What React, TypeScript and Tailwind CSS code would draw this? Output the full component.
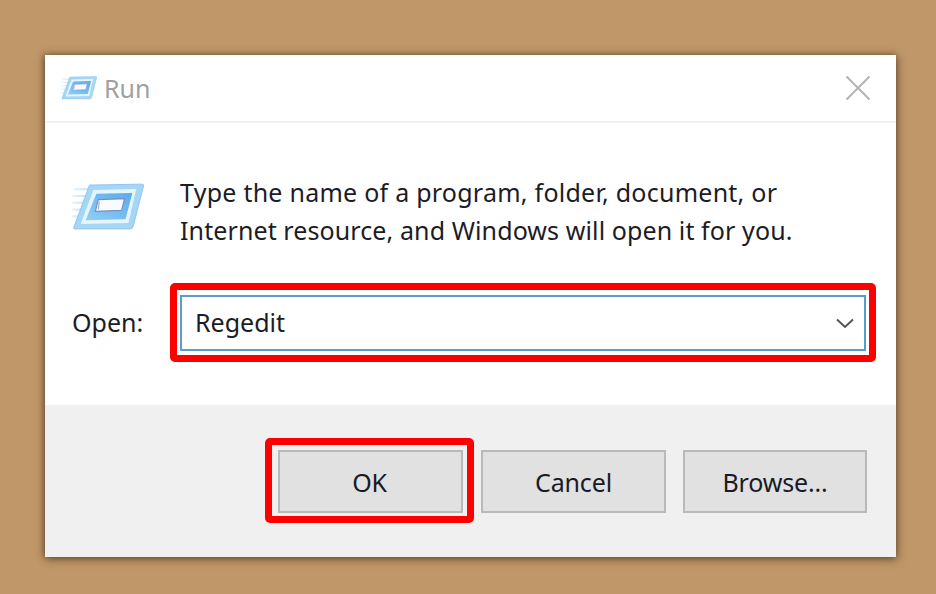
import React from "react";

const font = { fontFamily: '"Noto Sans", "Open Sans", sans-serif' };

function RunIcon({ size }: { size: number }) {
  const id = `g${size}`;
  const fade = `f${size}`;
  return (
    <svg width={size} height={size * 0.68} viewBox="0 0 74 50" className="block blur-[0.4px]">
      <defs>
        <linearGradient id={id} x1="0" y1="1" x2="1" y2="0">
          <stop offset="0" stopColor="#8ed0f6" />
          <stop offset="1" stopColor="#5aaaea" />
        </linearGradient>
        <linearGradient id={fade} x1="0" y1="0" x2="1" y2="0">
          <stop offset="0" stopColor="#e9f5fc" />
          <stop offset="1" stopColor="#bde0f6" />
        </linearGradient>
      </defs>
      <g fill={`url(#${fade})`}>
        <rect x="2" y="5" width="20" height="2.400" />
        <rect x="0" y="12" width="18" height="2.400" />
        <rect x="0" y="19" width="16" height="2.400" />
        <rect x="0" y="26" width="14" height="2.400" />
        <rect x="0" y="33" width="11" height="2.400" />
      </g>
      <path d="M18 2 L72 1 Q74 1 73.500 3 L63 44 Q62 47 60 47 L3 47 Q1 47 2 45 Z" fill="#a5d6f5" stroke="#8cc6ee" strokeWidth="1" />
      <path d="M22 7 L66 6 L58 41 L9 42 Z" fill="#e6f4fc" />
      <path d="M25 11 L62 10 L55 37 L14 38 Z" fill={`url(#${id})`} />
      <path d="M27 17 L54 16 L51 28 L24 29 Z" fill="#f8fcff" stroke="#7a8cc8" strokeWidth="1.200" />
      <line x1="28" y1="19" x2="27" y2="27" stroke="#9a9ab4" strokeWidth="1" />
    </svg>
  );
}

function Btn({ label, w }: { label: string; w: string }) {
  return (
    <div className={`${w} h-[63px] border-2 border-[#b9b9b9] bg-[#e1e1e1] flex items-center justify-center pt-[2px] text-[25px] tracking-[-0.15px] text-[#1a1a24]`}>
      {label}
    </div>
  );
}

export default function App() {
  return (
    <div className="w-[936px] h-[594px] overflow-hidden bg-[#c09768] pt-[55px] pl-[45px]" style={font}>
      <div className="w-[851px] h-[502px] bg-white flex flex-col shadow-[-1px_0_6px_rgba(70,50,30,0.55),1px_2px_9px_rgba(70,50,30,0.6)]">
        <div className="h-[68px] shrink-0 border-b-2 border-[#f1f1f1] flex items-center pl-[16px] pr-[25px]">
          <RunIcon size={36} />
          <span className="ml-[7px] pt-[2px] text-[25px] text-[#a0a0a0]">Run</span>
          <svg width="26" height="26" viewBox="0 0 26 26" className="ml-auto">
            <path d="M1.500 1.500 L24.500 24.500 M24.500 1.500 L1.500 24.500" stroke="#b4b4b4" strokeWidth="2" />
          </svg>
        </div>
        <div className="flex-1 flex flex-col">
          <div className="flex pl-[27px] pt-[50px]">
            <div className="pt-[10px] w-[72px]">
              <RunIcon size={72} />
            </div>
            <div className="ml-[36px] text-[25px] leading-[38px] text-[#1c1c26]">
              <p className="tracking-[0.25px]">Type the name of a program, folder, document, or</p>
              <p className="tracking-[0.1px]">Internet resource, and Windows will open it for you.</p>
            </div>
          </div>
          <div className="flex items-center pl-[27px] mt-[34px]">
            <span className="w-[98px] pt-[1px] text-[25px] text-[#1c1c26]">Open:</span>
            <div className="w-[706px] h-[79px] border-[7px] border-[#ff0000] rounded-[5px] pl-[3px] pr-[3px] pt-[5px] pb-[4px]">
              <div className="h-full border-2 border-[#5a9bc9] flex items-center pl-[13px] pr-[10px] text-[25px] text-[#1c1c26]">
                <span>Regedit</span>
                <svg width="18" height="11" viewBox="0 0 18 11" className="ml-auto">
                  <path d="M1 1.500 L9 9 L17 1.500" fill="none" stroke="#555555" strokeWidth="2" />
                </svg>
              </div>
            </div>
          </div>
        </div>
        <div className="h-[152px] shrink-0 bg-[#f0f0f0] flex items-start pl-[220px] pt-[33px]">
          <div className="border-[7px] border-[#ff0000] rounded-[5px] pl-[6px] pr-[4px] pt-[5px] pb-[3px] mr-[7px]">
            <Btn label="OK" w="w-[185px] pr-[2px]" />
          </div>
          <div className="mt-[12px] mr-[17px]">
            <Btn label="Cancel" w="w-[185px]" />
          </div>
          <div className="mt-[12px]">
            <Btn label="Browse..." w="w-[184px]" />
          </div>
        </div>
      </div>
    </div>
  );
}
